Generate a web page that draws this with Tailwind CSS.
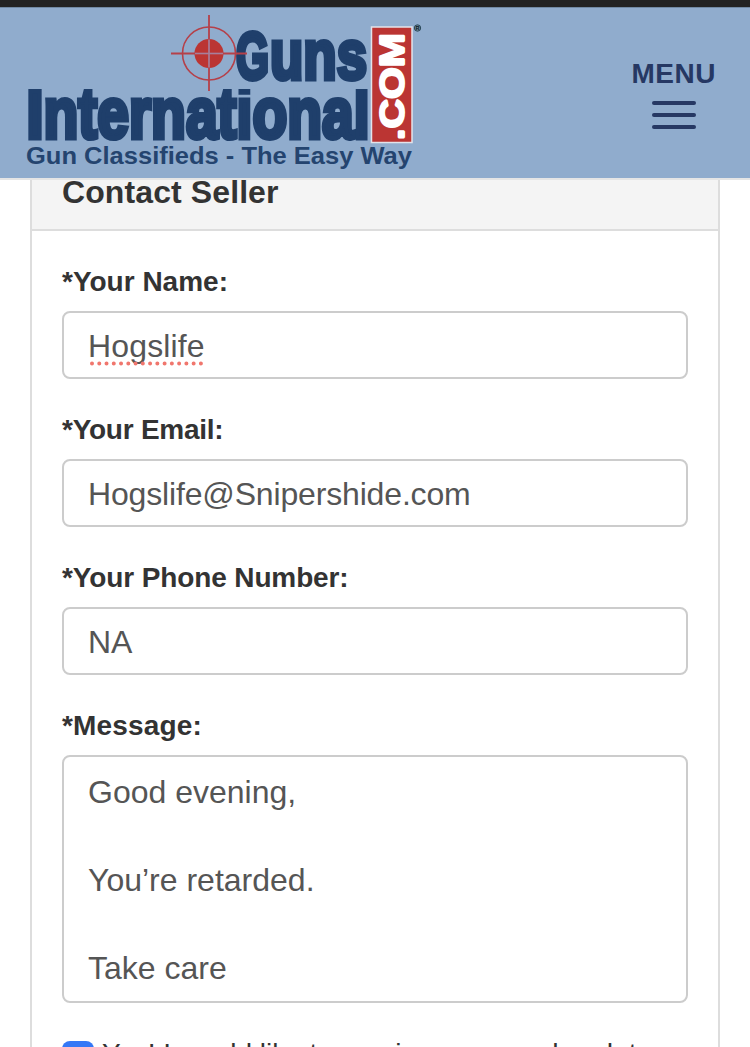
<!DOCTYPE html>
<html lang="en">
<head>
    <meta charset="UTF-8">
    <meta name="viewport" content="width=device-width, initial-scale=1.0">
    <title>Contact Seller - Guns International</title>
    <script src="https://cdn.jsdelivr.net/npm/@tailwindcss/browser@4"></script>
    <style>
        body {
            font-family: 'Liberation Sans', Arial, sans-serif;
        }
    </style>
</head>
<body class="bg-white h-[1047px] overflow-hidden text-[#333333]">
    <header class="h-[180px] border-t-[7px] border-t-[#222222] border-b-2 border-b-[#e5e5e5] bg-[#90accd] shadow-[inset_0_1px_0_#7189a3] flex justify-between">
        <a href="#" aria-label="Guns International">
            <svg class="block" width="440" height="171" viewBox="0 7 440 171" font-family="Liberation Sans, Arial, sans-serif" font-weight="bold">
                <defs>
                    <clipPath id="line2"><rect x="20" y="89" width="350" height="53"/></clipPath>
                </defs>
                <!-- Guns -->
                <g fill="#1f3f6b" stroke="#1f3f6b" stroke-width="5">
                    <text x="236" y="78.500" font-size="66" textLength="33" lengthAdjust="spacingAndGlyphs">G</text>
                    <text x="270" y="78.500" font-size="71" textLength="97" lengthAdjust="spacingAndGlyphs">uns</text>
                </g>
                <!-- International -->
                <g fill="#1f3f6b" stroke="#1f3f6b" stroke-width="5" clip-path="url(#line2)">
                    <text x="26.500" y="137.500" font-size="68" textLength="17" lengthAdjust="spacingAndGlyphs">I</text>
                    <text x="43.500" y="137.500" font-size="72" textLength="326" lengthAdjust="spacingAndGlyphs">nternational</text>
                </g>
                <!-- crosshair -->
                <circle cx="209" cy="53.500" r="14.500" fill="#bb3533"/>
                <circle cx="209" cy="53.500" r="26.500" fill="none" stroke="#b54049" stroke-width="1.600"/>
                <path d="M171 53.500H247M209 15V91" stroke="#b54049" stroke-width="1.800"/>
                <path d="M195 53.500H223M209 39.500V67.500" stroke="#a77f9b" stroke-width="1.600"/>
                <!-- .COM -->
                <rect x="371.500" y="27" width="40.500" height="115.500" fill="#bb3533" stroke="#e3e3ea" stroke-width="1.500"/>
                <text transform="translate(403.500 140) rotate(-90)" font-size="35" fill="#fff" stroke="#fff" stroke-width="2" stroke-linejoin="bevel" textLength="107" lengthAdjust="spacingAndGlyphs">.COM</text>
                <circle cx="417.500" cy="28" r="3.200" fill="#6d8796" stroke="#2b4a5c" stroke-width="1"/>
                <text x="415.600" y="30" font-size="5.500" fill="#0c1a24">R</text>
                <text x="26" y="163.500" font-size="24.500" fill="#24446f" textLength="386" lengthAdjust="spacingAndGlyphs">Gun Classifieds - The Easy Way</text>
            </svg>
        </a>
        <button type="button" class="mr-[34px] pt-[51px] flex flex-col items-center text-[#263863]">
            <span class="text-[28px] leading-8 font-bold tracking-[0.5px]">MENU</span>
            <span class="mt-[11px] flex flex-col gap-2">
                <span class="w-11 h-1 rounded-full bg-[#263863]"></span>
                <span class="w-11 h-1 rounded-full bg-[#263863]"></span>
                <span class="w-11 h-1 rounded-full bg-[#263863]"></span>
            </span>
        </button>
    </header>

    <main class="mx-[30px] h-[900px] border-x-2 border-[#dddddd]">
        <div class="h-[51px] overflow-hidden bg-[#f4f4f4] border-b-2 border-[#dddddd] px-[30px]">
            <h1 class="-mt-1.5 text-[32px] leading-9 font-bold tracking-[0.1px]">Contact Seller</h1>
        </div>

        <form class="px-[30px] pt-[30px]">
            <div class="h-[148px]">
                <label for="name" class="block h-[50px] pt-[5px] text-[28px] leading-8 font-bold">*Your Name:</label>
                <div class="relative">
                    <input type="text" id="name" value="Hogslife" spellcheck="false"
                        class="block w-full h-[68px] border-2 border-[#cccccc] rounded-lg px-6 pt-0.5 text-[32px] tracking-[0.15px] text-[#555555]">
                    <!-- spelling mark -->
                    <svg class="absolute left-[28px] top-[50px]" width="116" height="5" viewBox="0 0 116 5">
                        <path d="M2 2.500H114" stroke="#f0766d" stroke-width="4" stroke-linecap="round" stroke-dasharray="0 7.260"/>
                    </svg>
                </div>
            </div>

            <div class="h-[148px]">
                <label for="email" class="block h-[50px] pt-[5px] text-[28px] leading-8 font-bold tracking-[-0.25px]">*Your Email:</label>
                <input type="text" id="email" value="Hogslife@Snipershide.com" spellcheck="false"
                    class="block w-full h-[68px] border-2 border-[#cccccc] rounded-lg px-6 pt-0.5 text-[32px] tracking-[-0.16px] text-[#555555]">
            </div>

            <div class="h-[148px]">
                <label for="phone" class="block h-[50px] pt-[5px] text-[28px] leading-8 font-bold tracking-[-0.12px]">*Your Phone Number:</label>
                <input type="text" id="phone" value="NA" spellcheck="false"
                    class="block w-full h-[68px] border-2 border-[#cccccc] rounded-lg px-6 pt-0.5 text-[32px] text-[#555555]">
            </div>

            <div>
                <label for="message" class="block h-[50px] pt-[5px] text-[28px] leading-8 font-bold tracking-[0.15px]">*Message:</label>
                <textarea id="message" spellcheck="false"
                    class="block w-full h-[248px] border-2 border-[#cccccc] rounded-lg px-6 pt-[13px] text-[32px] leading-[44px] text-[#555555] resize-none overflow-hidden">Good evening,

You’re retarded.

Take care</textarea>
            </div>

            <label class="mt-[38px] flex items-start gap-2 text-[28px] leading-8 whitespace-nowrap">
                <span class="w-8 h-8 rounded-lg bg-[#3478f6]"></span>
                <span class="-mt-[3px]">Yes! I would like to receive news and updates</span>
            </label>
        </form>
    </main>
</body>
</html>
